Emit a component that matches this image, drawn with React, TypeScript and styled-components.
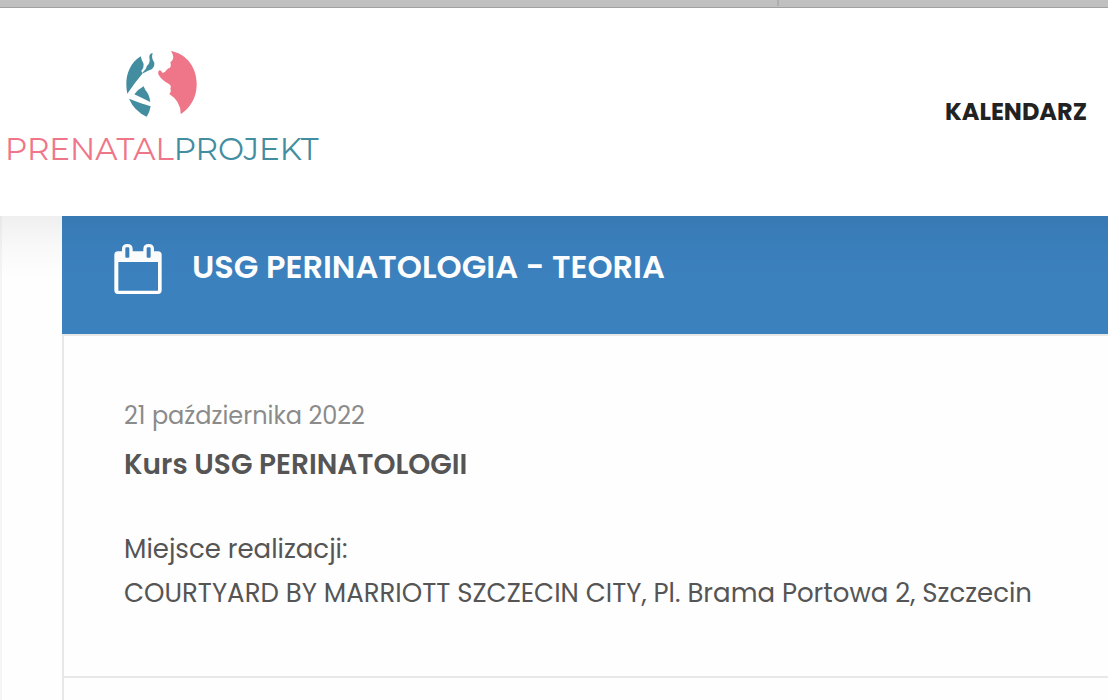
import React from "react";
import styled, { createGlobalStyle } from "styled-components";

const GlobalStyle = createGlobalStyle`
  *, *::before, *::after { box-sizing: border-box; }
  body {
    margin: 0;
    background: #fefefe;
    color: #555;
    font-family: Poppins, Inter, "Liberation Sans", sans-serif;
  }
  h1, h2, p { margin: 0; }
`;

const Page = styled.div`
  display: flex;
  flex-direction: column;
  min-height: 100vh;
  overflow: hidden;
`;

const WindowBar = styled.div`
  display: flex;
  justify-content: flex-end;
  height: 8px;
  background: #c0c0c0;
  border-bottom: 1px solid #a0a0a0;
`;

const WindowTab = styled.div`
  width: 331px;
  height: 6px;
  border-left: 2px solid #adadad;
`;

const Header = styled.header`
  position: relative;
  z-index: 1;
  display: flex;
  align-items: center;
  justify-content: space-between;
  height: 208px;
  padding: 0 21px 0 5px;
  background: #fff;

  &::after {
    content: "";
    position: absolute;
    top: 100%;
    left: 0;
    right: 0;
    height: 64px;
    background: linear-gradient(rgba(0, 0, 0, 0.06), rgba(0, 0, 0, 0.02) 50%, transparent);
    pointer-events: none;
  }
`;

const Logo = styled.a`
  display: flex;
  flex-direction: column;
  align-items: center;
  gap: 12px;
  padding-bottom: 4px;
  text-decoration: none;
`;

const Wordmark = styled.span`
  color: #ef7689;
  font-family: Montserrat, Inter, "Liberation Sans", sans-serif;
  font-size: 31px;
  font-weight: 400;
  line-height: 40px;
`;

const WordmarkEnd = styled.span`
  color: #428d9f;
`;

const NavLink = styled.a`
  color: #222;
  font-size: 24px;
  font-weight: 700;
  line-height: 36px;
  text-decoration: none;
`;

const Main = styled.main`
  flex: 1;
  display: flex;
  padding-left: 60px;
  border-left: 2px solid #f5f5f5;
`;

const Course = styled.article`
  flex: 1;
  display: flex;
  flex-direction: column;
`;

const CourseHeader = styled.div`
  display: flex;
  align-items: flex-start;
  gap: 30px;
  height: 118px;
  padding: 28px 52px;
  background: #3b81be;
`;

const CourseTitle = styled.h1`
  color: #fff;
  font-size: 32px;
  font-weight: 600;
  line-height: 46px;
`;

const CourseBody = styled.div`
  flex: 1;
  border: solid #e8e8e8;
  border-width: 2px 0 0 2px;
`;

const Session = styled.section`
  padding: 60px 60px 61px;
  border-bottom: 2px solid #e8e8e8;
`;

const SessionDate = styled.p`
  color: #8b8b8b;
  font-size: 24px;
  line-height: 40px;
`;

const SessionTitle = styled.h2`
  padding: 6px 0 40px;
  font-size: 28px;
  font-weight: 600;
  line-height: 45px;
`;

const Venue = styled.p`
  font-size: 26px;
  line-height: 44px;
`;

function LogoMark() {
  return (
    <svg width="71" height="66" viewBox="384 153 213 198" aria-hidden="true">
      <g fill="#428d9f">
        <path d="M428 169C399 187 384 220 385 254Q385 268 388 281Q409 249 433 221L430 212Q438 204 437 192Q431 182 428 169Z" />
        <path d="M464 159Q453 161 454 173Q458 188 447 197L443 207L430 222Q451 212 461 208Q470 200 469 188Q459 175 464 159Z" />
        <path d="M437 259Q420 268 409 283L457 306Q454 282 442 270Z" />
        <path d="M393 296Q425 309 458 319Q455 337 446 350Q409 333 393 296Z" />
      </g>
      <path
        fill="#ef7689"
        d="M519 153C570 163 598 207 596 257C595 293 576 324 548 343Q549 304 514 282Q521 274 517 266Q521 258 514 253Q492 241 482 225Q478 216 484 211Q490 211 493 218Q500 220 505 211Q510 203 516 203Q520 197 517 187Q534 176 519 153Z"
      />
    </svg>
  );
}

function CalendarIcon() {
  return (
    <svg width="48" height="50" viewBox="42 42 144 150" aria-hidden="true">
      <path
        fill="#fff"
        fillRule="evenodd"
        d="M54 64H66V57Q66 42 82 42Q98 42 98 57V64H130V57Q130 42 146 42Q162 42 162 57V64H174Q185 64 185 75V181Q185 192 174 192H54Q43 192 43 181V75Q43 64 54 64ZM55 96V182H174V96ZM79 52Q76 52 76 55V80Q76 83 79 83H85Q88 83 88 80V55Q88 52 85 52ZM143 52Q140 52 140 55V80Q140 83 143 83H149Q152 83 152 80V55Q152 52 149 52Z"
      />
    </svg>
  );
}

export default function App() {
  return (
    <>
      <GlobalStyle />
      <Page>
        <WindowBar>
          <WindowTab />
        </WindowBar>
        <Header>
          <Logo href="#">
            <LogoMark />
            <Wordmark>
              PRENATAL<WordmarkEnd>PROJEKT</WordmarkEnd>
            </Wordmark>
          </Logo>
          <nav>
            <NavLink href="#kalendarz">KALENDARZ</NavLink>
          </nav>
        </Header>
        <Main>
          <Course>
            <CourseHeader>
              <CalendarIcon />
              <CourseTitle>USG PERINATOLOGIA - TEORIA</CourseTitle>
            </CourseHeader>
            <CourseBody>
              <Session>
                <SessionDate>21 października 2022</SessionDate>
                <SessionTitle>Kurs USG PERINATOLOGII</SessionTitle>
                <Venue>Miejsce realizacji:</Venue>
                <Venue>COURTYARD BY MARRIOTT SZCZECIN CITY, Pl. Brama Portowa 2, Szczecin</Venue>
              </Session>
            </CourseBody>
          </Course>
        </Main>
      </Page>
    </>
  );
}
